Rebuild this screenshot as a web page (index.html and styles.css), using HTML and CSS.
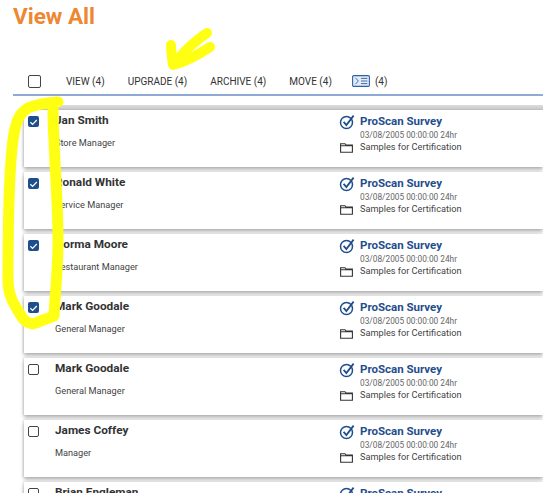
FILE: index.html
```html
<!DOCTYPE html>
<html lang="en">
<head>
    <meta charset="UTF-8">
    <meta name="viewport" content="width=device-width, initial-scale=1.0">
    <title>View All</title>
    <link rel="stylesheet" href="styles.css">
</head>
<body>
    <svg width="0" height="0" class="defs">
        <symbol id="survey" viewBox="0 0 16 16">
            <circle cx="7.5" cy="8.5" r="6" fill="none" stroke="#1f4e8c" stroke-width="1.5"/>
            <path d="M4.6 7.8 L7.4 11 L14.6 1.6" fill="none" stroke="#1f4e8c" stroke-width="1.8"/>
        </symbol>
        <symbol id="folder" viewBox="0 0 13 10">
            <path d="M0.6 0.7 H5 L6 2 H12.4 V9.3 H0.6 Z M0.6 2.8 H12.4" fill="none" stroke="#333" stroke-width="1.1"/>
        </symbol>
        <symbol id="tick" viewBox="0 0 12 12">
            <path d="M2.6 6.3 L5 8.6 L9.6 3.8" fill="none" stroke="#fff" stroke-width="1.4"/>
        </symbol>
    </svg>

    <div class="page">
        <h1 class="title">View All</h1>
        <div class="toolbar">
            <span class="checkbox"></span>
            <div class="actions">
                <span>VIEW (4)</span>
                <span>UPGRADE (4)</span>
                <span>ARCHIVE (4)</span>
                <span>MOVE (4)</span>
                <span class="compare">
                    <svg width="18" height="12" viewBox="0 0 18 12">
                        <rect x="0.6" y="0.6" width="16.8" height="10.8" rx="1.2" fill="#e3ebf6" stroke="#2f62a5" stroke-width="1.1"/>
                        <path d="M3.4 2.8 L6.4 6 L3.4 9.2 M9 3.4 H15.4 M9 6 H15.4 M9 8.6 H15.4" fill="none" stroke="#2f62a5" stroke-width="0.9"/>
                    </svg>
                    <span>(4)</span>
                </span>
            </div>
        </div>

        <div class="list">
            <div class="card">
                <span class="pick"><span class="checkbox checked"><svg width="12" height="12"><use href="#tick"/></svg></span></span>
                <div class="person"><div class="name">Jan Smith</div><div class="role">Store Manager</div></div>
                <div class="survey">
                    <svg class="survey-icon" width="16" height="16"><use href="#survey"/></svg>
                    <div class="survey-name">ProScan Survey</div>
                    <div class="date">03/08/2005 00:00:00 24hr</div>
                    <svg class="folder-icon" width="13" height="10"><use href="#folder"/></svg>
                    <div class="group">Samples for Certification</div>
                </div>
            </div>
            <div class="card">
                <span class="pick"><span class="checkbox checked"><svg width="12" height="12"><use href="#tick"/></svg></span></span>
                <div class="person"><div class="name">Ronald White</div><div class="role">Service Manager</div></div>
                <div class="survey">
                    <svg class="survey-icon" width="16" height="16"><use href="#survey"/></svg>
                    <div class="survey-name">ProScan Survey</div>
                    <div class="date">03/08/2005 00:00:00 24hr</div>
                    <svg class="folder-icon" width="13" height="10"><use href="#folder"/></svg>
                    <div class="group">Samples for Certification</div>
                </div>
            </div>
            <div class="card">
                <span class="pick"><span class="checkbox checked"><svg width="12" height="12"><use href="#tick"/></svg></span></span>
                <div class="person"><div class="name">Norma Moore</div><div class="role">Restaurant Manager</div></div>
                <div class="survey">
                    <svg class="survey-icon" width="16" height="16"><use href="#survey"/></svg>
                    <div class="survey-name">ProScan Survey</div>
                    <div class="date">03/08/2005 00:00:00 24hr</div>
                    <svg class="folder-icon" width="13" height="10"><use href="#folder"/></svg>
                    <div class="group">Samples for Certification</div>
                </div>
            </div>
            <div class="card">
                <span class="pick"><span class="checkbox checked"><svg width="12" height="12"><use href="#tick"/></svg></span></span>
                <div class="person"><div class="name">Mark Goodale</div><div class="role">General Manager</div></div>
                <div class="survey">
                    <svg class="survey-icon" width="16" height="16"><use href="#survey"/></svg>
                    <div class="survey-name">ProScan Survey</div>
                    <div class="date">03/08/2005 00:00:00 24hr</div>
                    <svg class="folder-icon" width="13" height="10"><use href="#folder"/></svg>
                    <div class="group">Samples for Certification</div>
                </div>
            </div>
            <div class="card">
                <span class="pick"><span class="checkbox"></span></span>
                <div class="person"><div class="name">Mark Goodale</div><div class="role">General Manager</div></div>
                <div class="survey">
                    <svg class="survey-icon" width="16" height="16"><use href="#survey"/></svg>
                    <div class="survey-name">ProScan Survey</div>
                    <div class="date">03/08/2005 00:00:00 24hr</div>
                    <svg class="folder-icon" width="13" height="10"><use href="#folder"/></svg>
                    <div class="group">Samples for Certification</div>
                </div>
            </div>
            <div class="card">
                <span class="pick"><span class="checkbox"></span></span>
                <div class="person"><div class="name">James Coffey</div><div class="role">Manager</div></div>
                <div class="survey">
                    <svg class="survey-icon" width="16" height="16"><use href="#survey"/></svg>
                    <div class="survey-name">ProScan Survey</div>
                    <div class="date">03/08/2005 00:00:00 24hr</div>
                    <svg class="folder-icon" width="13" height="10"><use href="#folder"/></svg>
                    <div class="group">Samples for Certification</div>
                </div>
            </div>
            <div class="card">
                <span class="pick"><span class="checkbox"></span></span>
                <div class="person"><div class="name">Brian Engleman</div><div class="role">Manager</div></div>
                <div class="survey">
                    <svg class="survey-icon" width="16" height="16"><use href="#survey"/></svg>
                    <div class="survey-name">ProScan Survey</div>
                    <div class="date">03/08/2005 00:00:00 24hr</div>
                    <svg class="folder-icon" width="13" height="10"><use href="#folder"/></svg>
                    <div class="group">Samples for Certification</div>
                </div>
            </div>
        </div>
    </div>

    <!-- highlighter marks drawn over the screenshot -->
    <svg class="marker" width="543" height="493" viewBox="0 0 543 493">
        <path d="M58 102 C46 103 36 104 28 108 C18 114 15 125 13 140 C9 170 8 230 8 280 C8 296 14 304 20 314 C24 322 30 325 36 323 C42 320 50 318 54 316 C55 295 58 270 58 240 C58 205 55 170 54 140 C53 125 53 115 53 106" fill="none" stroke="#ffff14" stroke-width="11" stroke-linecap="round" stroke-linejoin="round"/>
        <path d="M207 33 C195 41 185 50 176 62 M171 45 C171 52 172 58 173 65 C185 62 198 55 210 47" fill="none" stroke="#ffff14" stroke-width="10" stroke-linecap="round" stroke-linejoin="round"/>
    </svg>
</body>
</html>
```

FILE: styles.css
```css
body, html {
    margin: 0;
    padding: 0;
    height: 100%;
    overflow: hidden;
    background-color: #fff;
    font-family: Roboto, 'Liberation Sans', sans-serif;
}
.defs {
    position: absolute;
}
.page {
    width: 543px;
}
.title {
    margin: 0;
    padding: 3px 0 0 13px;
    height: 40px;
    font-size: 22.5px;
    line-height: 26px;
    font-weight: 700;
    color: #ee8732;
    box-sizing: border-box;
}
.toolbar {
    display: flex;
    align-items: center;
    height: 56px;
    margin-left: 13px;
    padding: 28px 0 0 15px;
    box-sizing: border-box;
    border-bottom: 2px solid #8fabd3;
}
.actions {
    display: flex;
    align-items: center;
    gap: 23px;
    margin-left: 25px;
    font-size: 10px;
    color: #333;
    white-space: nowrap;
}
.compare {
    display: flex;
    align-items: center;
    gap: 5px;
    margin-left: -3px;
}
.checkbox {
    display: flex;
    align-items: center;
    justify-content: center;
    width: 13px;
    height: 13px;
    border: 1.5px solid #444;
    border-radius: 2px;
    box-sizing: border-box;
    flex: none;
}
.checkbox.checked {
    width: 11px;
    height: 11px;
    border: none;
    background-color: #1f4e8c;
}
.list {
    display: flex;
    flex-direction: column;
    gap: 5px;
    padding: 14px 0 0 24px;
    background: linear-gradient(#dcdcdc, #c8c8c8) 24px 9px / 100% 5px no-repeat;
}
.card {
    display: flex;
    flex: none;
    height: 57px;
    background-color: #fff;
    box-shadow: 0 3px 4px rgba(0, 0, 0, 0.28), -1px 0 2px rgba(0, 0, 0, 0.12);
}
.pick {
    width: 31px;
    padding: 6px 0 0 4px;
    box-sizing: border-box;
}
.card .checkbox {
    width: 11px;
    height: 11px;
}
.person {
    width: 284px;
    padding-top: 3px;
}
.name {
    font-size: 11.8px;
    line-height: 15px;
    font-weight: 700;
    color: #333;
}
.role {
    margin-top: 8px;
    font-size: 9.2px;
    line-height: 13px;
    color: #444;
}
.survey {
    display: grid;
    grid-template-columns: 16px auto;
    column-gap: 5px;
    align-content: start;
    padding-top: 4px;
    white-space: nowrap;
}
.survey-icon {
    grid-row: 1;
}
.survey-name {
    font-size: 11.5px;
    line-height: 15px;
    font-weight: 700;
    color: #1f4e8c;
}
.date {
    grid-column: 2;
    font-size: 8.3px;
    line-height: 11px;
    color: #666;
}
.folder-icon {
    margin: 2px 0 0 1px;
}
.group {
    margin-top: -1px;
    font-size: 9.2px;
    line-height: 13px;
    color: #444;
}
.marker {
    position: absolute;
    top: 0;
    left: 0;
    pointer-events: none;
}
```
